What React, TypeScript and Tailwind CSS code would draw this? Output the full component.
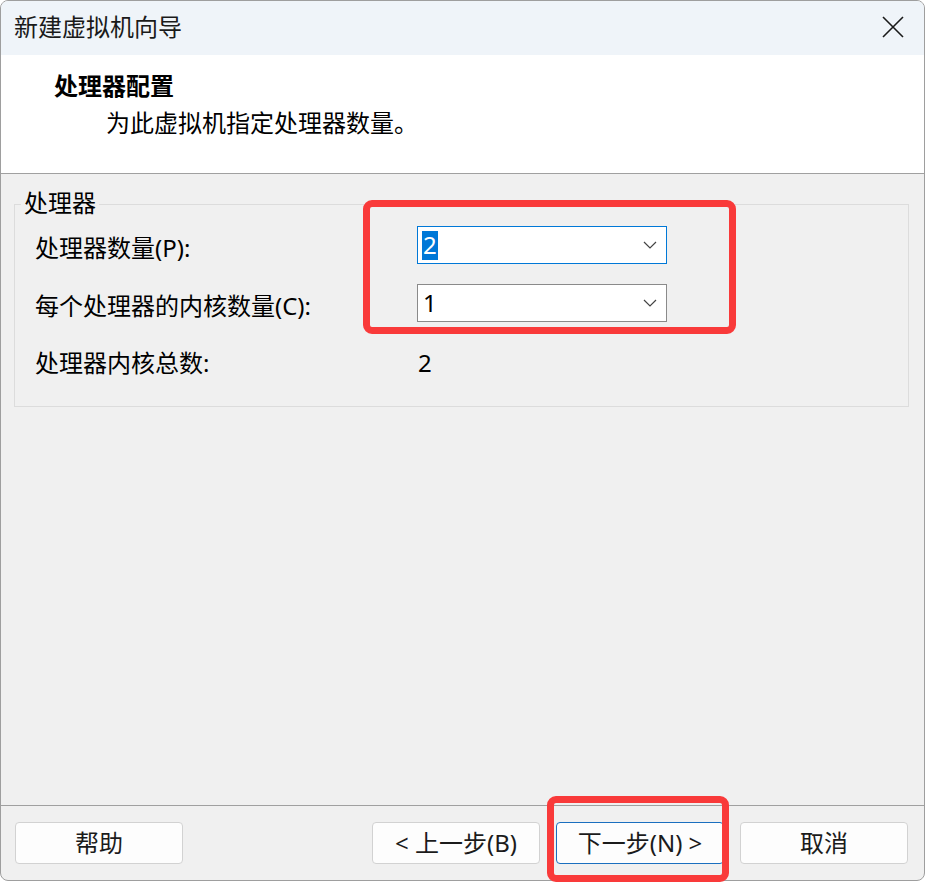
import React from "react";

const FONT = {
  fontFamily: '"Noto Sans", "Noto Sans CJK SC", sans-serif',
};

function Chevron() {
  return (
    <svg width="14" height="8" viewBox="0 0 14 8" className="shrink-0">
      <path d="M1 1 L7 7 L13 1" fill="none" stroke="#444" strokeWidth="1.2" />
    </svg>
  );
}

function Combo({ value, focused }: { value: string; focused?: boolean }) {
  return (
    <div
      className={
        "w-[250px] h-[38px] bg-white flex items-center justify-between pl-[4px] pr-[9px] border text-[24px] " +
        (focused ? "border-[#0078d7]" : "border-[#8a8a8a]")
      }
    >
      {focused ? (
        <span className="bg-[#0078d7] text-white h-[29px] px-[1px] flex items-center leading-none text-[24px]">
          {value}
        </span>
      ) : (
        <span className="text-black h-[29px] px-[1px] flex items-center leading-none text-[24px]">{value}</span>
      )}
      <Chevron />
    </div>
  );
}

function Btn({ children, primary }: { children: React.ReactNode; primary?: boolean }) {
  return (
    <button
      className={
        "w-[168px] h-[42px] rounded-[4px] bg-[#fdfdfd] text-[#1b1b1b] text-[24px] leading-none flex items-center justify-center border " +
        (primary ? "border-[#1a6fbf]" : "border-[#d2d2d2]")
      }
      style={FONT}
    >
      {children}
    </button>
  );
}

export default function App() {
  return (
    <div className="w-[926px] h-[882px] bg-white relative" style={FONT}>
      <div className="w-[925px] h-[881px] rounded-[8px] border border-[#9e9e9e] overflow-hidden flex flex-col bg-[#f0f0f0]">
        {/* title bar */}
        <div className="h-[54px] bg-[#eff4f9] flex items-center justify-between pl-[13px] pr-[20px] shrink-0">
          <span className="text-[24px] leading-none text-[#1a1a1a] -mt-[3px]">新建虚拟机向导</span>
          <svg width="22" height="22" viewBox="0 0 22 22" className="-mt-[2px]">
            <path d="M1 1 L21 21 M21 1 L1 21" stroke="#1a1a1a" strokeWidth="1.6" />
          </svg>
        </div>

        {/* page header */}
        <div className="h-[119px] bg-white border-b border-[#a0a0a0] shrink-0 flex flex-col pl-[53px] pt-[19px]">
          <span className="text-[24px] leading-[24px] font-bold text-black">处理器配置</span>
          <span className="text-[24px] leading-[24px] text-black pl-[52px] mt-[13px]">
            为此虚拟机指定处理器数量。
          </span>
        </div>

        {/* body */}
        <div className="flex-1 pl-[13px] pr-[15px] pt-[30px]">
          <div className="relative h-[203px] border border-[#dcdcdc] pl-[20px] pt-[21px] flex flex-col">
            <span className="absolute left-[6px] -top-[14px] bg-[#f0f0f0] px-[3px] text-[24px] leading-[24px] text-black">
              处理器
            </span>
            <div className="flex items-center h-[38px]">
              <span className="w-[382px] text-[24px] leading-none text-black pt-[6px]">处理器数量(P):</span>
              <Combo value="2" focused />
            </div>
            <div className="flex items-center h-[38px] mt-[20px]">
              <span className="w-[382px] text-[24px] leading-none text-black pt-[6px]">
                每个处理器的内核数量(C):
              </span>
              <Combo value="1" />
            </div>
            <div className="flex items-center h-[38px] mt-[22px]">
              <span className="w-[382px] text-[24px] leading-none text-black">处理器内核总数:</span>
              <span className="text-[24px] leading-none text-black pl-[1px]">2</span>
            </div>
          </div>
        </div>

        {/* footer */}
        <div className="h-[75px] border-t border-[#a0a0a0] shrink-0 flex items-start justify-between pl-[14px] pr-[16px] pt-[16px]">
          <Btn>帮助</Btn>
          <div className="flex gap-[16px]">
            <Btn>&lt; 上一步(B)</Btn>
            <Btn primary>下一步(N) &gt;</Btn>
            <Btn>取消</Btn>
          </div>
        </div>
      </div>

      {/* highlight frames */}
      <div className="absolute left-[363px] top-[200px] w-[373px] h-[134px] border-[7px] border-[#f93a3a] rounded-[9px] pointer-events-none" />
      <div className="absolute left-[547px] top-[796px] w-[182px] h-[86px] border-[7px] border-[#f93a3a] rounded-[9px] pointer-events-none" />
    </div>
  );
}
